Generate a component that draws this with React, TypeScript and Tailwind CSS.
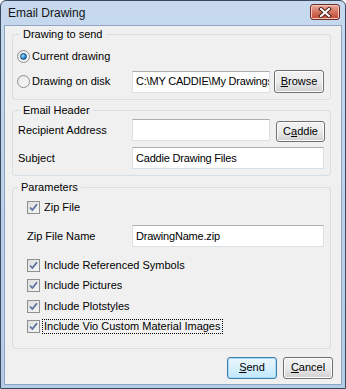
import React from 'react';

const font = { fontFamily: '"Liberation Sans", Arial, sans-serif' };

const Radio = ({ checked }: { checked?: boolean }) => (
  <span className="relative flex h-[13px] w-[13px] shrink-0 items-center justify-center rounded-full border border-[#8e8f8f] bg-gradient-to-br from-[#e6e6e6] to-[#fbfbfb]">
    {checked && (
      <span className="h-[7px] w-[7px] rounded-full border border-[#1c5180] bg-[radial-gradient(circle_at_35%_35%,#9fe3ff,#2a8ad4_55%,#0e4c86)]" />
    )}
  </span>
);

const Check = () => (
  <span className="flex h-[13px] w-[13px] shrink-0 items-center justify-center border border-[#8e8f8f] bg-gradient-to-br from-[#dedede] to-[#f5f5f5]">
    <svg width="9" height="9" viewBox="0 0 9 9">
      <path d="M1 4.5 L3.4 7 L8 1.2" fill="none" stroke="#5a6f9f" strokeWidth="1.8" />
    </svg>
  </span>
);

const TextBox = ({ value, className }: { value?: string; className: string }) => (
  <div
    className={`flex h-[22px] items-center overflow-hidden whitespace-nowrap border border-[#dbdfe6] border-t-[#abadb3] bg-white pl-[3px] text-[11px] tracking-[-0.2px] text-black ${className}`}
  >
    {value}
  </div>
);

const Btn = ({
  children,
  className,
  isDefault,
}: {
  children: React.ReactNode;
  className: string;
  isDefault?: boolean;
}) => (
  <div
    className={`flex items-center justify-center rounded-[3px] border text-[11px] text-black ${
      isDefault
        ? 'border-[#3c7fb1] bg-gradient-to-b from-[#eaf6fd] via-[#d9f0fc] to-[#bee6fd] shadow-[inset_0_0_0_1px_#a8daf3]'
        : 'border-[#707070] bg-gradient-to-b from-[#f2f2f2] via-[#ebebeb] to-[#cfcfcf] shadow-[inset_0_0_0_1px_#fcfcfc]'
    } ${className}`}
  >
    {children}
  </div>
);

const CheckRow = ({ label, focused }: { label: string; focused?: boolean }) => (
  <div className="flex h-[16px] items-center gap-[3px] pl-[14px]">
    <Check />
    <span className={`px-[1px] leading-[13px] ${focused ? 'outline outline-1 outline-dotted outline-black' : ''}`}>
      {label}
    </span>
  </div>
);

export default function App() {
  return (
    <div style={font} className="h-[389px] w-[346px] text-[11px] text-black">
      <div className="flex h-full w-full flex-col rounded-t-[6px] border border-[#3a4b60] bg-gradient-to-b from-[#c6d9ee] via-[#bcd2ea] to-[#b4cce6]">
        {/* title bar */}
        <div className="flex h-[24px] shrink-0 items-center justify-between pl-[7px] pr-[5px]">
          <span className="text-[12px] text-[#151515]">Email Drawing</span>
          <div className="mb-[2px] flex h-[16px] w-[30px] items-center justify-center rounded-[3px] border border-[#6b2c24] bg-gradient-to-b from-[#e9aa9d] via-[#d2735f] to-[#c2472f] shadow-[inset_0_0_0_1px_#f3c7bd]">
            <svg width="14" height="11" viewBox="0 0 14 11">
              <path d="M3 2 L11 9 M11 2 L3 9" stroke="#4a1f18" strokeWidth="4" strokeLinecap="square" />
              <path d="M3 2 L11 9 M11 2 L3 9" stroke="#ffffff" strokeWidth="2" strokeLinecap="square" />
            </svg>
          </div>
        </div>

        {/* client area */}
        <div className="mx-[3px] mb-[3px] flex flex-1 flex-col border border-[#90a6c0] bg-[#f0f0f0] pl-[7px] pr-[10px]">
          {/* Drawing to send */}
          <fieldset className="mt-[1px] rounded-[3px] border border-[#d5dfe5] px-[4px] pb-[6px]">
            <legend className="ml-[3px] px-[3px] leading-[14px]">Drawing to send</legend>
            <div className="mt-[7px] flex h-[16px] items-center gap-[2px]">
              <Radio checked />
              <span>Current drawing</span>
            </div>
            <div className="mt-[6px] flex h-[23px] items-center">
              <div className="flex w-[115px] items-center gap-[2px]">
                <Radio />
                <span>Drawing on disk</span>
              </div>
              <TextBox className="w-[138px]" value="C:\MY CADDIE\My Drawings\" />
              <Btn className="ml-[4px] h-[23px] w-[50px]">
                <span>
                  <u>B</u>rowse
                </span>
              </Btn>
            </div>
          </fieldset>

          {/* Email Header */}
          <fieldset className="mt-[3px] rounded-[3px] border border-[#d5dfe5] px-[5px] pb-[6px]">
            <legend className="ml-[2px] px-[3px] leading-[14px]">Email Header</legend>
            <div className="mt-[2px] flex h-[22px] items-center">
              <span className="w-[114px]">Recipient Address</span>
              <TextBox className="w-[138px]" />
              <Btn className="ml-[6px] mt-[2px] h-[21px] w-[49px]">
                <span>
                  C<u>a</u>ddie
                </span>
              </Btn>
            </div>
            <div className="mt-[6px] flex h-[22px] items-center">
              <span className="w-[114px]">Subject</span>
              <TextBox className="w-[192px]" value="Caddie Drawing Files" />
            </div>
          </fieldset>

          {/* Parameters */}
          <fieldset className="mt-[4px] rounded-[3px] border border-[#d5dfe5] pb-[13px]">
            <legend className="ml-[5px] px-[3px] leading-[14px]">Parameters</legend>
            <div className="mt-[5px]">
              <CheckRow label="Zip File" />
            </div>
            <div className="mt-[10px] flex h-[22px] items-center pl-[14px]">
              <span className="w-[105px]">Zip File Name</span>
              <TextBox className="w-[192px]" value="DrawingName.zip" />
            </div>
            <div className="mt-[10px] flex flex-col gap-[4.5px]">
              <CheckRow label="Include Referenced Symbols" />
              <CheckRow label="Include Pictures" />
              <CheckRow label="Include Plotstyles" />
              <CheckRow label="Include Vio Custom Material Images" focused />
            </div>
          </fieldset>

          {/* buttons */}
          <div className="-mr-[2px] mt-[8px] flex justify-end gap-[6px]">
            <Btn isDefault className="h-[22px] w-[50px]">
              <span>
                <u>S</u>end
              </span>
            </Btn>
            <Btn className="h-[22px] w-[50px]">
              <span>
                <u>C</u>ancel
              </span>
            </Btn>
          </div>
        </div>
      </div>
    </div>
  );
}
